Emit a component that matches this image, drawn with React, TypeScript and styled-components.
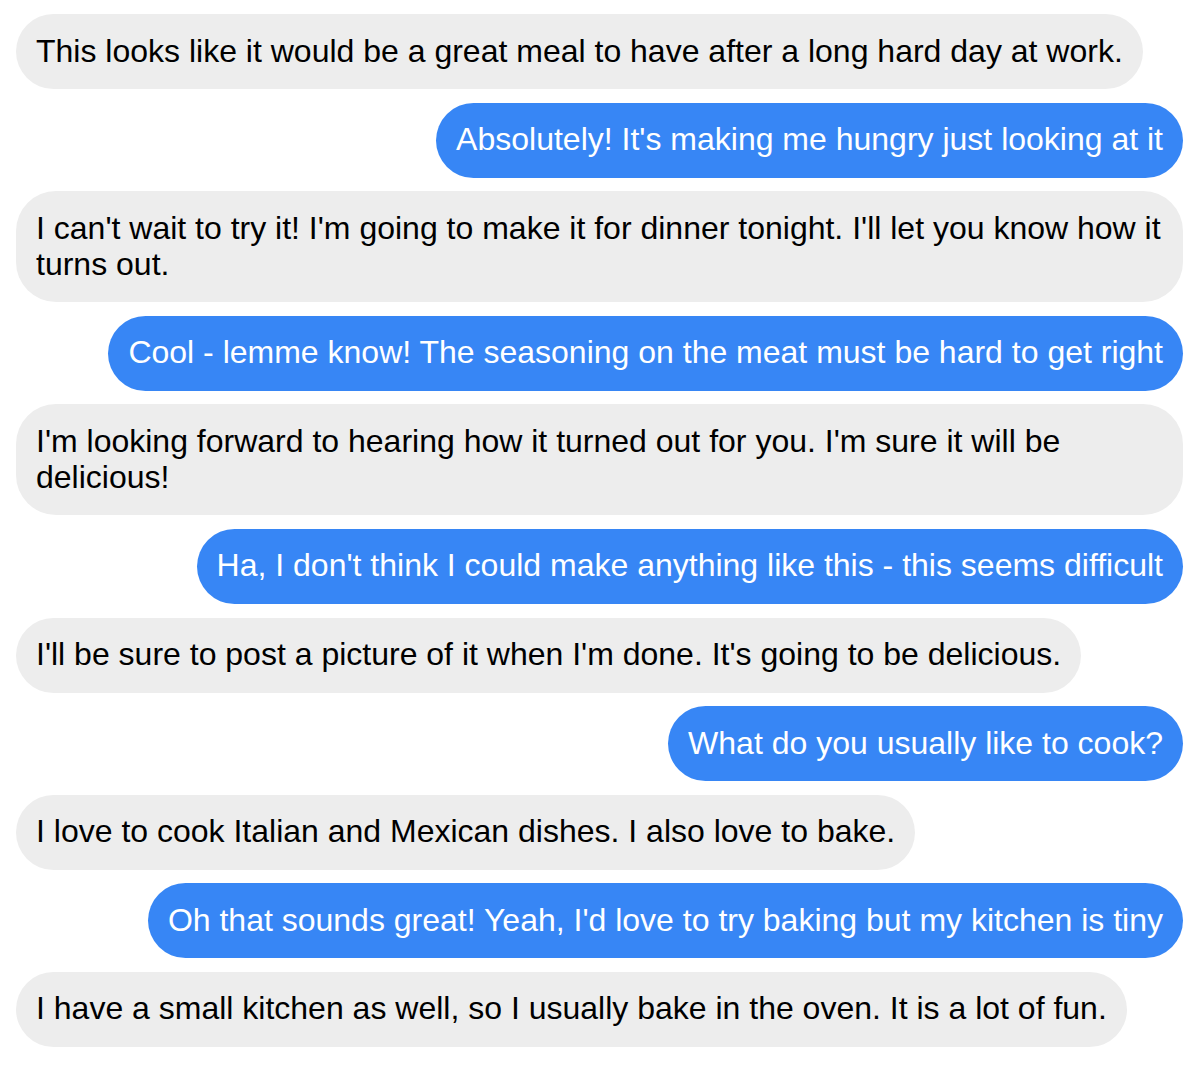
import styled, { createGlobalStyle } from "styled-components";

const GlobalStyle = createGlobalStyle`
  html, body {
    margin: 0;
    padding: 0;
    background-color: #ffffff;
  }
`;

const Thread = styled.main`
  display: flex;
  flex-direction: column;
  gap: 13.6px;
  padding: 14px 15px 14px 16px;
  font-family: "Liberation Sans", Arial, Helvetica, sans-serif;
`;

const Bubble = styled.div<{ $mine: boolean }>`
  align-self: ${(p) => (p.$mine ? "flex-end" : "flex-start")};
  max-width: 100%;
  box-sizing: border-box;
  padding: 18.5px 20px 20.5px;
  border-radius: 40px;
  font-size: 32px;
  line-height: 36px;
  background-color: ${(p) => (p.$mine ? "#3786f5" : "#ededed")};
  color: ${(p) => (p.$mine ? "#ffffff" : "#000000")};
`;

type Message = {
  mine: boolean;
  text: string;
};

const MESSAGES: Message[] = [
  { mine: false, text: "This looks like it would be a great meal to have after a long hard day at work." },
  { mine: true, text: "Absolutely! It's making me hungry just looking at it" },
  {
    mine: false,
    text: "I can't wait to try it! I'm going to make it for dinner tonight. I'll let you know how it turns out.",
  },
  { mine: true, text: "Cool - lemme know! The seasoning on the meat must be hard to get right" },
  {
    mine: false,
    text: "I'm looking forward to hearing how it turned out for you. I'm sure it will be delicious!",
  },
  { mine: true, text: "Ha, I don't think I could make anything like this - this seems difficult" },
  { mine: false, text: "I'll be sure to post a picture of it when I'm done. It's going to be delicious." },
  { mine: true, text: "What do you usually like to cook?" },
  { mine: false, text: "I love to cook Italian and Mexican dishes. I also love to bake." },
  { mine: true, text: "Oh that sounds great! Yeah, I'd love to try baking but my kitchen is tiny" },
  { mine: false, text: "I have a small kitchen as well, so I usually bake in the oven. It is a lot of fun." },
];

export default function App() {
  return (
    <>
      <GlobalStyle />
      <Thread>
        {MESSAGES.map((m, i) => (
          <Bubble key={i} $mine={m.mine}>
            {m.text}
          </Bubble>
        ))}
      </Thread>
    </>
  );
}
